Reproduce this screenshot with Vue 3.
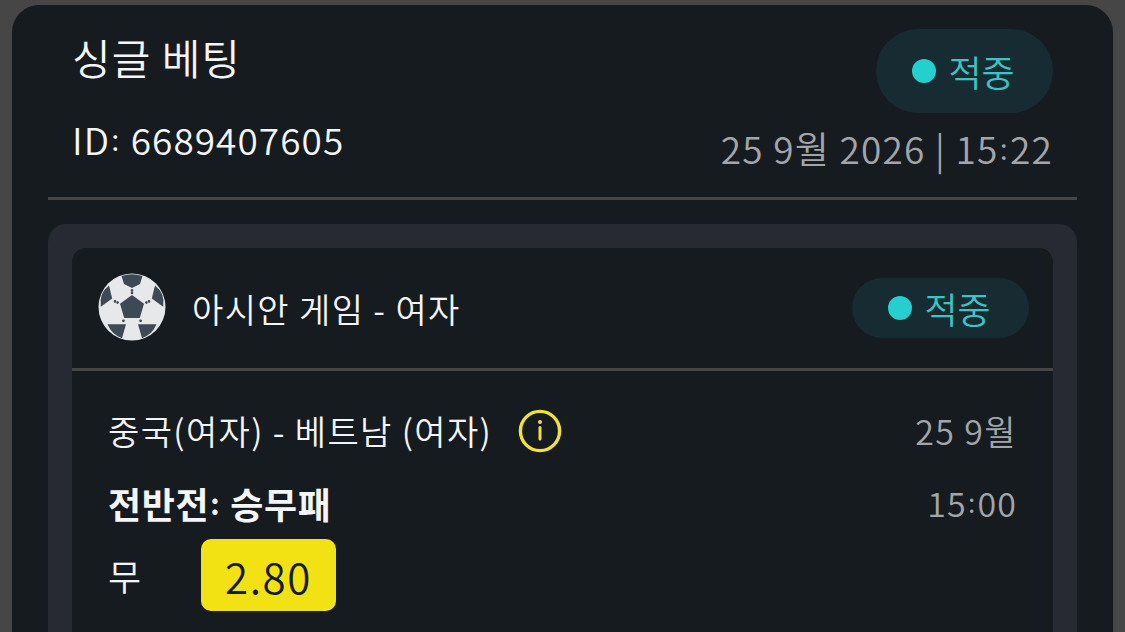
<template>
  <div class="page">
    <div class="sheet">
      <header class="top">
        <div class="top-left">
          <h1>싱글 베팅</h1>
          <div class="bet-id">ID<span class="colon">:</span> 6689407605</div>
        </div>
        <div class="top-right">
          <div class="pill big"><i></i>적중</div>
          <div class="stamp">25 9월 2026 | 15<span class="colon">:</span>22</div>
        </div>
      </header>

      <section class="panel">
        <div class="card">
          <div class="card-head">
            <div class="league">
              <svg class="ball" viewBox="0 0 68 68">
                <circle cx="34" cy="34" r="33.5" fill="#e6e8ea" />
                <g fill="#3d4a56">
                  <path d="M34 22 L46 30.7 L41.8 45 L26.2 45 L22 30.7 Z" />
                  <path d="M23.5 3 Q34 -0.5 44.5 3 L42 11 L34 15 L26 11 Z" />
                  <path d="M11 12.5 L14.2 25.5 L2.8 33.8 Q0.8 20 11 12.5 Z" />
                  <path d="M57 12.5 L53.8 25.5 L65.2 33.8 Q67.2 20 57 12.5 Z" />
                  <path d="M9.5 51.3 L28 51.3 L24 65.2 Q13.5 61.5 9.5 51.3 Z" />
                  <path d="M58.5 51.3 L40 51.3 L44 65.2 Q54.5 61.5 58.5 51.3 Z" />
                  <circle cx="34" cy="17.4" r="1.3" />
                  <circle cx="34" cy="20" r="1.3" />
                  <circle cx="17" cy="28.4" r="1.3" />
                  <circle cx="19.6" cy="29.6" r="1.3" />
                  <circle cx="51" cy="28.4" r="1.3" />
                  <circle cx="48.4" cy="29.6" r="1.3" />
                  <circle cx="25.4" cy="47.8" r="1.4" />
                  <circle cx="42.6" cy="47.8" r="1.4" />
                </g>
              </svg>
              <span class="league-name">아시안 게임 - 여자</span>
            </div>
            <div class="pill"><i></i>적중</div>
          </div>

          <div class="card-body">
            <div class="row match">
              <div class="teams">
                <span>중국(여자) - 베트남 (여자)</span>
                <svg class="info" viewBox="0 0 44 44">
                  <circle cx="22" cy="22" r="19.6" fill="none" stroke="#f0e03a" stroke-width="3.4" />
                  <circle cx="22" cy="13" r="2" fill="#f0e03a" />
                  <path d="M22 18.5 V30" stroke="#f0e03a" stroke-width="3" stroke-linecap="round" />
                </svg>
              </div>
              <span class="muted">25 9월</span>
            </div>
            <div class="row market">
              <strong>전반전<span class="colon">:</span> 승무패</strong>
              <span class="muted">15<span class="colon">:</span>00</span>
            </div>
            <div class="pick">
              <span class="pick-name">무</span>
              <span class="odds">2.80</span>
            </div>
          </div>
        </div>
      </section>
    </div>
  </div>
</template>

<script setup>
</script>

<style>
html, body {
  margin: 0;
  height: 632px;
  overflow: hidden;
  background: #464646;
}
</style>

<style scoped>
.page {
  height: 632px;
  padding: 5px 12px 0;
  box-sizing: border-box;
  overflow: hidden;
  font-family: "Noto Sans CJK KR", "Noto Sans", sans-serif;
  font-weight: 350;
  color: #f4f5f6;
}

.sheet {
  background: #161b20;
  border-radius: 27px 27px 0 0;
  padding: 0 36px;
  height: 800px;
}

.top {
  display: flex;
  justify-content: space-between;
  height: 192px;
  padding: 0 24px;
  border-bottom: 3px solid #464646;
}

h1 {
  margin: 0;
  padding-top: 23px;
  font-size: 42px;
  line-height: 58px;
  font-weight: 350;
  letter-spacing: 1px;
}

.bet-id {
  margin-top: 28px;
  font-size: 37px;
  line-height: 50px;
  letter-spacing: 1.05px;
}

.colon {
  display: inline-block;
  font-size: 0.8em;
  line-height: 1;
  padding: 0 0.04em;
  transform: translateY(-0.14em);
}

.top-right {
  display: flex;
  flex-direction: column;
  align-items: flex-end;
  padding-top: 24px;
}

.pill {
  display: flex;
  align-items: center;
  justify-content: center;
  box-sizing: border-box;
  width: 177px;
  height: 60px;
  padding-right: 2px;
  border-radius: 30px;
  background: #162c32;
  color: #3cc3c3;
  font-size: 36px;
  gap: 12px;
}

.pill i {
  width: 24px;
  height: 24px;
  border-radius: 50%;
  background: #25cfcf;
}

.pill.big {
  height: 84px;
  border-radius: 42px;
}

.stamp {
  margin-top: 10px;
  font-size: 37px;
  line-height: 50px;
  letter-spacing: 1.2px;
  color: #a3a5a8;
}

.panel {
  margin-top: 24px;
  padding: 24px;
  background: #272a33;
  border-radius: 18px 18px 0 0;
}

.card {
  background: #161b20;
  border-radius: 14px 14px 0 0;
  height: 500px;
}

.card-head {
  display: flex;
  align-items: center;
  justify-content: space-between;
  height: 120px;
  padding: 0 24px 0 26px;
  border-bottom: 3px solid #464646;
}

.league {
  display: flex;
  align-items: center;
  gap: 26px;
  padding-bottom: 3px;
  font-size: 34px;
  letter-spacing: 1.4px;
}

.league-name {
  padding-top: 3px;
}

.ball {
  width: 68px;
  height: 68px;
}

.card-body {
  padding: 35px 36px 0 36px;
}

.row {
  display: flex;
  justify-content: space-between;
  align-items: center;
  font-size: 34px;
  line-height: 50px;
  letter-spacing: 1.37px;
}

.teams {
  display: flex;
  align-items: center;
  gap: 26px;
}

.info {
  width: 44px;
  height: 44px;
}

.market {
  margin-top: 22px;
}

.market strong {
  font-weight: 700;
  font-size: 36px;
  letter-spacing: 0.6px;
}

.market .muted {
  letter-spacing: 1.1px;
}

.muted {
  color: #a3a5a8;
}

.pick {
  display: flex;
  align-items: center;
  margin-top: 11px;
  font-size: 36px;
}

.pick-name {
  width: 93px;
}

.odds {
  display: flex;
  align-items: center;
  justify-content: center;
  width: 135px;
  height: 72px;
  border-radius: 10px;
  background: #f2e213;
  color: #161b20;
  font-size: 42px;
  letter-spacing: 1.6px;
}
</style>
